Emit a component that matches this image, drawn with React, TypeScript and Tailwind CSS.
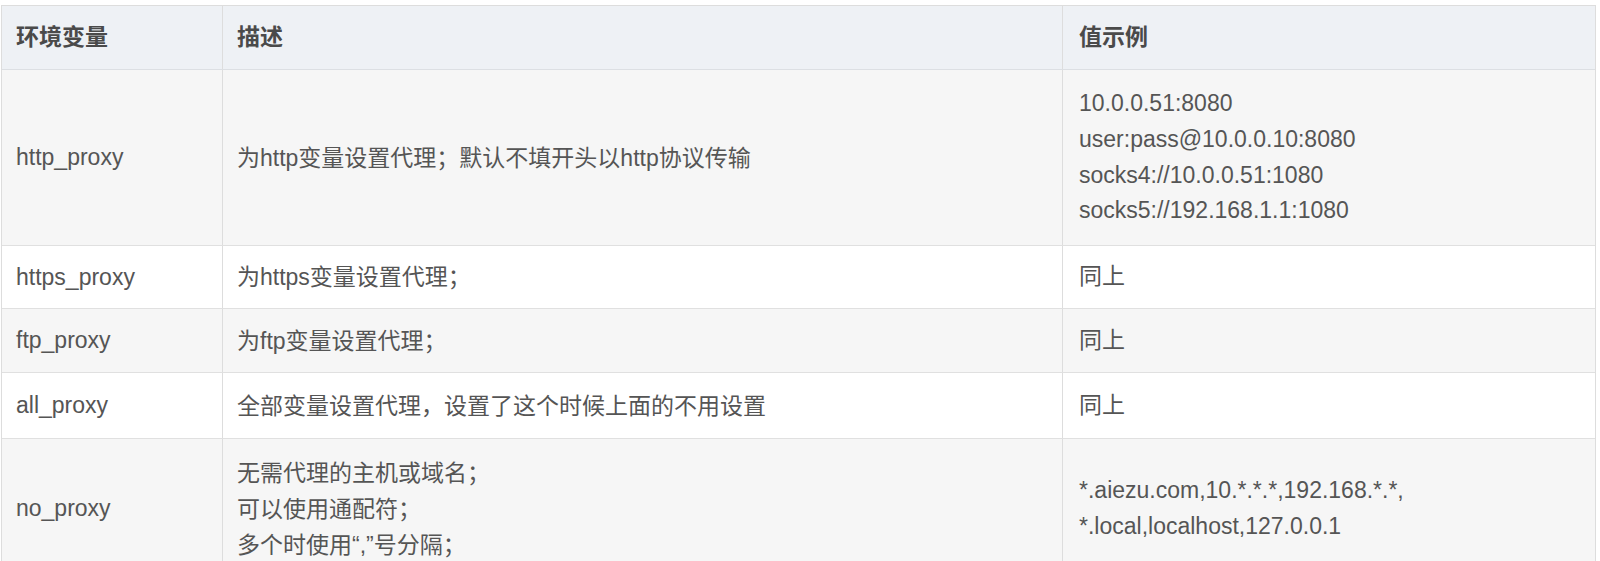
import React from "react";

const font = { fontFamily: '"Liberation Sans", Arial, "Noto Sans CJK SC", sans-serif' };

type Row = { name: string; desc: string[]; value: string[]; h: string; bg: string };

const rows: Row[] = [
  {
    name: "http_proxy",
    desc: ["为http变量设置代理；默认不填开头以http协议传输"],
    value: ["10.0.0.51:8080", "user:pass@10.0.0.10:8080", "socks4://10.0.0.51:1080", "socks5://192.168.1.1:1080"],
    h: "h-[176px]",
    bg: "bg-[#f6f6f6]",
  },
  { name: "https_proxy", desc: ["为https变量设置代理；"], value: ["同上"], h: "h-[63px]", bg: "bg-white" },
  { name: "ftp_proxy", desc: ["为ftp变量设置代理；"], value: ["同上"], h: "h-[64px]", bg: "bg-[#f6f6f6]" },
  { name: "all_proxy", desc: ["全部变量设置代理，设置了这个时候上面的不用设置"], value: ["同上"], h: "h-[66px]", bg: "bg-white" },
  {
    name: "no_proxy",
    desc: ["无需代理的主机或域名；", "可以使用通配符；", "多个时使用“,”号分隔；"],
    value: ["*.aiezu.com,10.*.*.*,192.168.*.*,", "*.local,localhost,127.0.0.1"],
    h: "h-[140px]",
    bg: "bg-[#f6f6f6]",
  },
];

export default function App() {
  return (
    <div className="w-[1600px] h-[561px] overflow-hidden bg-white pt-[5px] pl-[1px]" style={font}>
      <div className="w-[1595px] border-l border-t border-r border-[#dddddd] text-[23px] text-[#555555]">
        <div className="grid grid-cols-[221px_840px_532px] h-[64px] bg-[#eef1f5] border-b border-[#dcdfe3] font-bold text-[#4a4a4a]">
          <div className="flex items-center px-[14px] border-r border-[#dddddd]">环境变量</div>
          <div className="flex items-center px-[14px] border-r border-[#dddddd]">描述</div>
          <div className="flex items-center px-[16px]">值示例</div>
        </div>
        {rows.map((r) => (
          <div key={r.name} className={`grid grid-cols-[221px_840px_532px] border-b border-[#e0e0e0] ${r.h} ${r.bg}`}>
            <div className="flex items-center px-[14px] border-r border-[#dddddd]">{r.name}</div>
            <div className="flex flex-col justify-center px-[14px] border-r border-[#dddddd] leading-[36px]">
              {r.desc.map((d) => (
                <div key={d}>{d}</div>
              ))}
            </div>
            <div className="flex flex-col justify-center px-[16px] leading-[35.7px]">
              {r.value.map((v, i) => (
                <div key={i}>{v}</div>
              ))}
            </div>
          </div>
        ))}
      </div>
    </div>
  );
}
